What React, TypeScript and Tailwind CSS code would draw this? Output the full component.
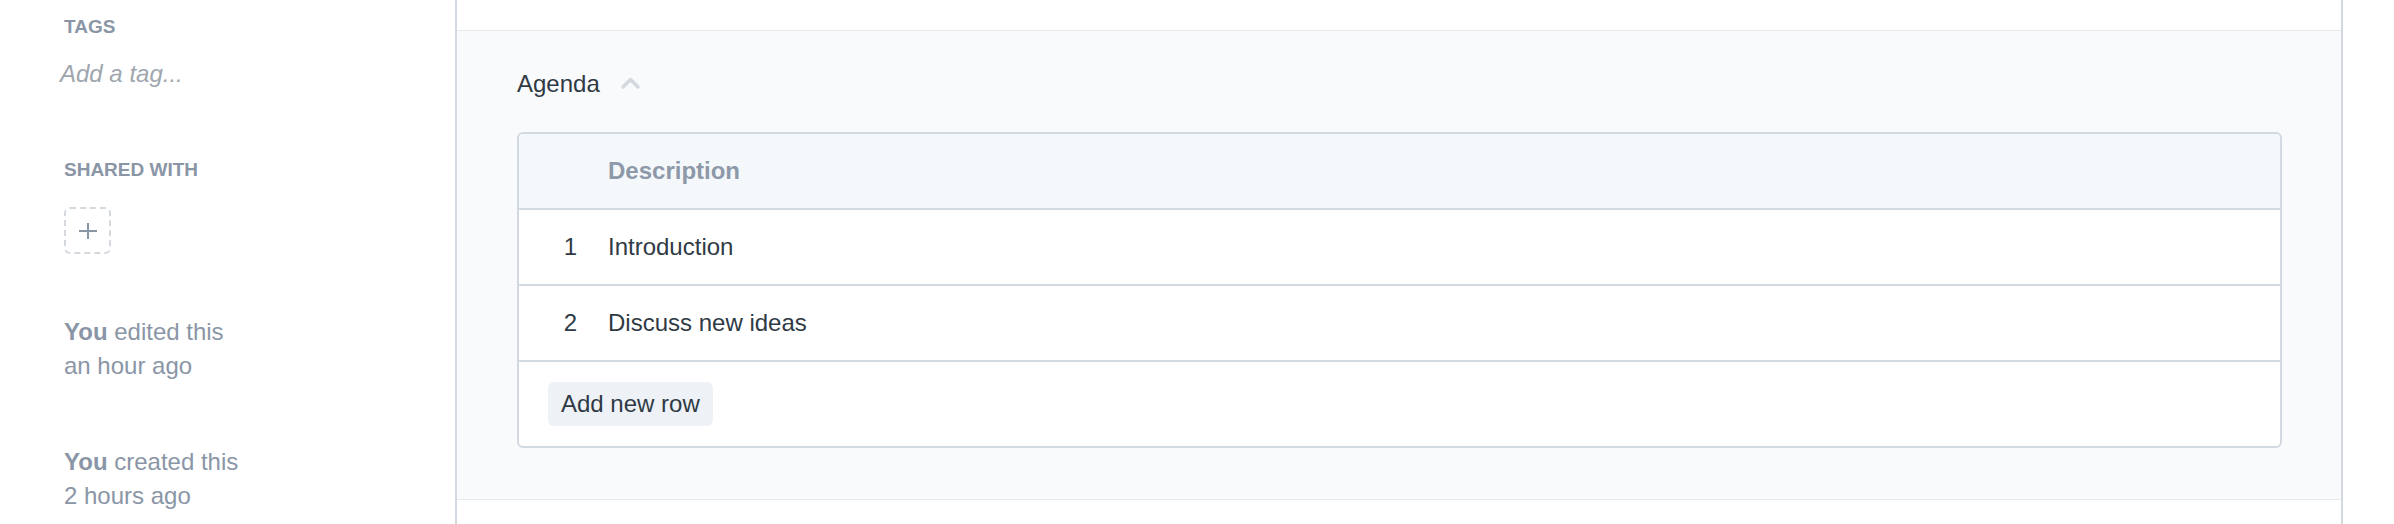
import React from 'react';

const rows = [
  { n: 1, text: 'Introduction' },
  { n: 2, text: 'Discuss new ideas' },
];

function Sidebar() {
  return (
    <div className="w-[455px] shrink-0 pl-[64px] pt-[15px] text-[#8a96a6]">
      <div className="text-[19px] leading-[23px] font-bold">TAGS</div>
      <div className="mt-[22px] -ml-[4px] text-[24px] leading-[28px] italic text-[#a0a6ad]">Add a tag...</div>

      <div className="mt-[70px] text-[19px] leading-[23px] font-bold">SHARED WITH</div>
      <button className="mt-[26px] w-[47px] h-[47px] rounded-[6px] border-2 border-dashed border-[#d3d9df] flex items-center justify-center">
        <svg width="20" height="20" viewBox="0 0 20 20" fill="none" stroke="#8a96a6" strokeWidth="2">
          <line x1="10" y1="2" x2="10" y2="18" />
          <line x1="1" y1="10" x2="19" y2="10" />
        </svg>
      </button>

      <div className="mt-[61px] text-[24px] leading-[34px]">
        <div><span className="font-bold">You</span> edited this</div>
        <div>an hour ago</div>
      </div>
      <div className="mt-[62px] text-[24px] leading-[34px]">
        <div><span className="font-bold">You</span> created this</div>
        <div>2 hours ago</div>
      </div>
    </div>
  );
}

function AgendaTable() {
  return (
    <div className="rounded-[6px] border-2 border-[#d2d9e0] bg-white overflow-hidden">
      <div className="grid grid-cols-[58px_1fr] h-[76px] items-center bg-[#f5f8fb] border-b-2 border-[#d2d9e0]">
        <div />
        <div className="pl-[31px] font-bold text-[24px] leading-[74px] text-[#8d99a8]">Description</div>
      </div>
      {rows.map((r) => (
        <div key={r.n} className="grid grid-cols-[58px_1fr] h-[76px] items-center border-b-2 border-[#d2d9e0] text-[#2f3a45] text-[24px]">
          <div className="text-right leading-[74px]">{r.n}</div>
          <div className="pl-[31px] leading-[74px]">{r.text}</div>
        </div>
      ))}
      <div className="pl-[29px] pt-[20px] pb-[20px]">
        <button className="h-[44px] px-[13px] rounded-[6px] bg-[#eef2f6] text-[24px] leading-[44px] text-[#2f3a45]">
          Add new row
        </button>
      </div>
    </div>
  );
}

export default function App() {
  return (
    <div className="flex h-screen bg-white overflow-hidden" style={{ fontFamily: '"Liberation Sans", Arial, sans-serif' }}>
      <Sidebar />
      <div className="w-[1888px] shrink-0 border-x-2 border-[#d2d9e0] flex flex-col">
        <div className="h-[30px] shrink-0" />
        <section className="border-y border-[#e5eaef] bg-[#f9fafc] pt-[39px] pl-[60px] pr-[59px] pb-[51px]">
          <div className="flex items-center h-[28px]">
            <span className="text-[24px] leading-[28px] text-[#2f3a45]">Agenda</span>
            <svg className="ml-[20px] mt-[-2px]" width="21" height="14" viewBox="0 0 21 14" fill="none" stroke="#d3d9df" strokeWidth="3.5" strokeLinecap="round" strokeLinejoin="round">
              <polyline points="3,11 10.5,3.5 18,11" />
            </svg>
          </div>
          <div className="mt-[34px]">
            <AgendaTable />
          </div>
        </section>
        <div className="flex-1" />
      </div>
      <div className="flex-1" />
    </div>
  );
}
